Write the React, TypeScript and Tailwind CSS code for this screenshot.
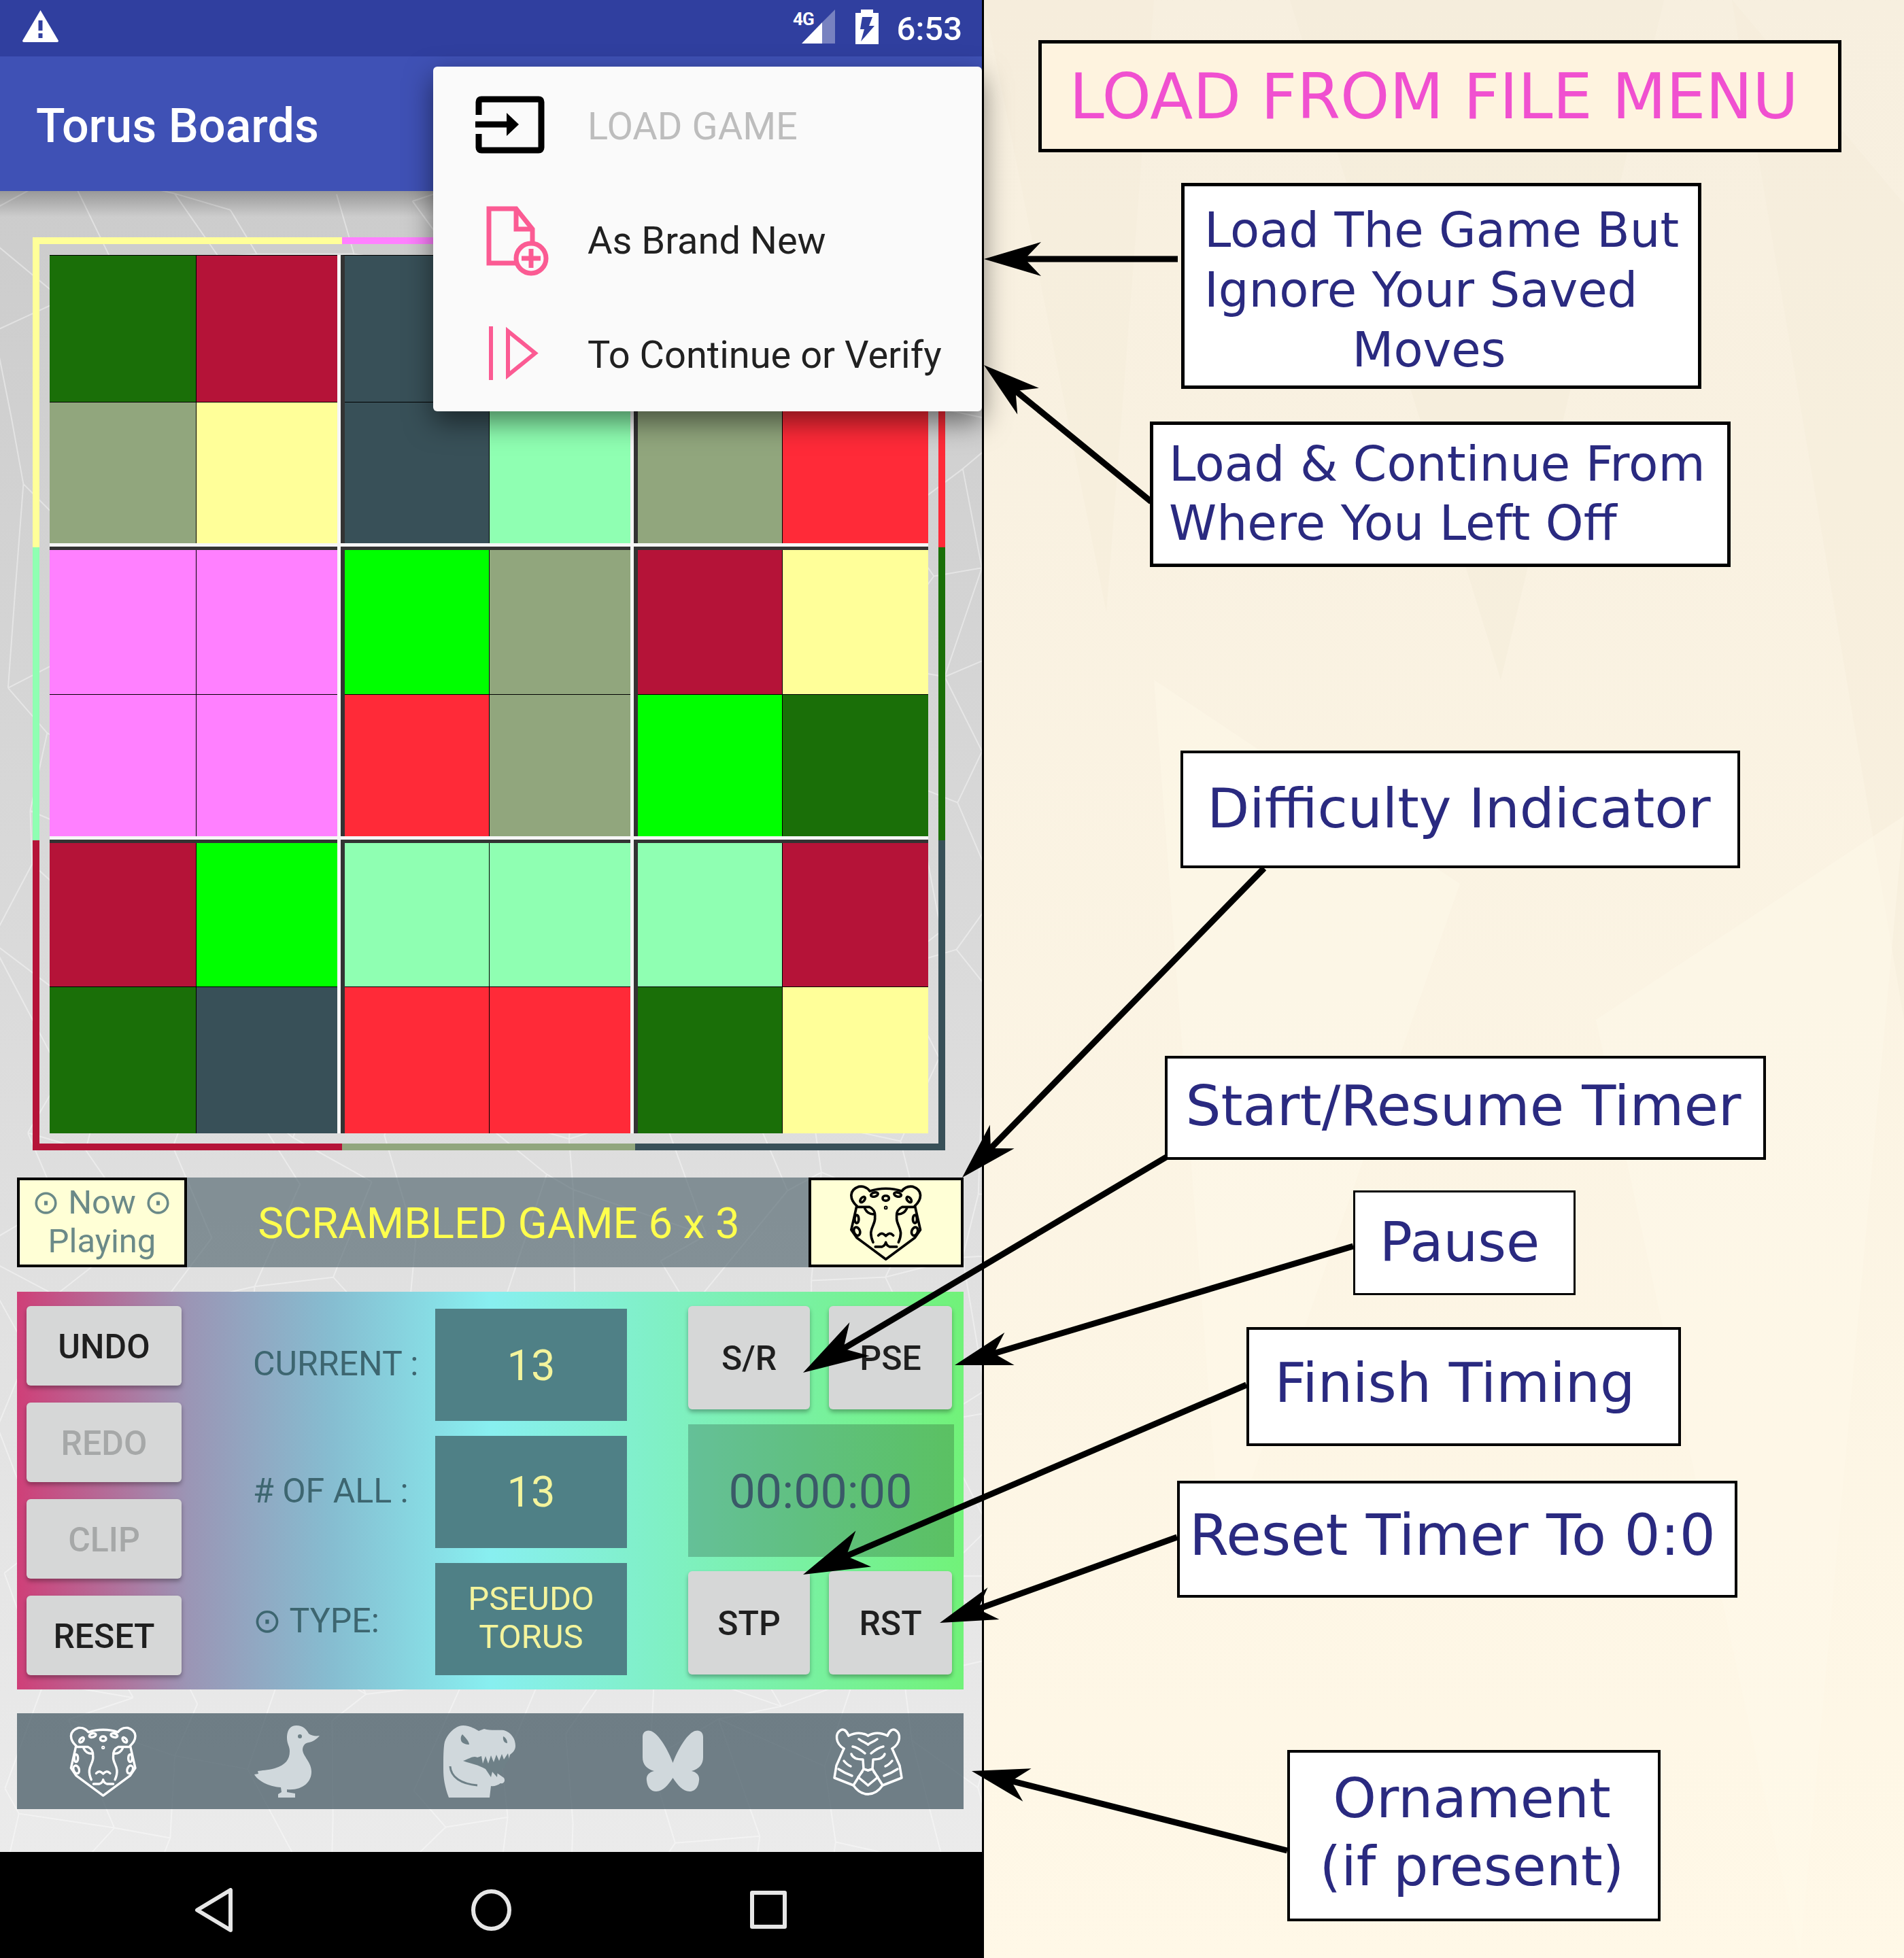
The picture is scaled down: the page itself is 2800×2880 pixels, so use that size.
const GREEN = "bg-[#1a6f08]";
const CRIM = "bg-[#b51338]";
const SLATE = "bg-[#385058]";
const OLIVE = "bg-[#91a67d]";
const YEL = "bg-[#ffff99]";
const MINT = "bg-[#8fffb2]";
const PINK = "bg-[#ff80ff]";
const LIME = "bg-[#00ff00]";
const RED = "bg-[#ff2a38]";

const board = [
  [GREEN, CRIM, SLATE, MINT, OLIVE, RED],
  [OLIVE, YEL, SLATE, MINT, OLIVE, RED],
  [PINK, PINK, LIME, OLIVE, CRIM, YEL],
  [PINK, PINK, RED, OLIVE, LIME, GREEN],
  [CRIM, LIME, MINT, MINT, MINT, CRIM],
  [GREEN, SLATE, RED, RED, GREEN, YEL],
];

const colTemplates = ["grid-cols-[215px_207px]", "grid-cols-[212px_207px]", "grid-cols-[212px_214px]"];
const rowTemplates = ["grid-rows-[215px_207px]", "grid-rows-[212px_208px]", "grid-rows-[211px_215px]"];

function Block({ row, col }: { row: number; col: number }) {
  const cells = [
    board[row * 2][col * 2],
    board[row * 2][col * 2 + 1],
    board[row * 2 + 1][col * 2],
    board[row * 2 + 1][col * 2 + 1],
  ];
  const top = row > 0 ? "border-t-[5px] border-t-[#333333]" : "border-t border-t-black";
  const left = col > 0 ? "border-l-[6px] border-l-[#333333]" : "";
  return (
    <div className={`grid gap-px bg-black ${colTemplates[col]} ${rowTemplates[row]} ${top} ${left}`}>
      {cells.map((c, i) => (
        <div key={i} className={c} />
      ))}
    </div>
  );
}

function Board() {
  return (
    <div className="grid h-[1292px] w-[1292px] grid-cols-[423px_426px_433px] grid-rows-[424px_426px_432px] gap-[5px] bg-[#f6f6f6]">
      {[0, 1, 2].map((r) => [0, 1, 2].map((c) => <Block key={`${r}-${c}`} row={r} col={c} />))}
    </div>
  );
}

function BoardFrame() {
  return (
    <div className="relative ml-[48px] mt-[68px] flex w-[1342px] flex-col">
      <div className="flex h-[10px]">
        <div className={`w-[455px] ${YEL}`} />
        <div className={`w-[431px] ${PINK}`} />
        <div className={`flex-1 ${RED}`} />
      </div>
      <div className="flex h-[1323px]">
        <div className="flex w-[10px] flex-col">
          <div className={`h-[446px] ${YEL}`} />
          <div className={`h-[431px] ${MINT}`} />
          <div className={`flex-1 ${CRIM}`} />
        </div>
        <div className="ml-[15px] mr-[15px] mt-[16px]">
          <Board />
        </div>
        <div className="flex w-[10px] flex-col">
          <div className={`h-[446px] ${RED}`} />
          <div className={`h-[431px] ${GREEN}`} />
          <div className={`flex-1 ${SLATE}`} />
        </div>
      </div>
      <div className="flex h-[10px]">
        <div className={`w-[455px] ${CRIM}`} />
        <div className={`w-[431px] ${OLIVE}`} />
        <div className={`flex-1 ${SLATE}`} />
      </div>
    </div>
  );
}

function Cheetah({ color, className }: { color: string; className: string }) {
  return (
    <svg viewBox="205 65 328 338" className={className} fill="none" stroke={color} strokeWidth="11" strokeLinecap="round" strokeLinejoin="round">
      <path d="M240 160 L216 265 L240 300 L368 395 L496 300 L520 265 L496 160" />
      <path d="M240 160 C208 130 205 90 250 75 C270 72 288 82 298 95 C340 80 396 80 438 95 C448 82 466 72 486 75 C531 90 528 130 496 160" />
      <ellipse cx="318" cy="110" rx="16" ry="9" transform="rotate(-15 318 110)" />
      <ellipse cx="420" cy="110" rx="16" ry="9" transform="rotate(15 420 110)" />
      <ellipse cx="368" cy="126" rx="14" ry="11" />
      <ellipse cx="266" cy="132" rx="8" ry="14" transform="rotate(40 266 132)" />
      <ellipse cx="470" cy="132" rx="8" ry="14" transform="rotate(-40 470 132)" />
      <circle cx="368" cy="168" r="3" />
      <path d="M246 165 L296 165 C318 175 322 190 320 210 C325 245 285 260 312 320" />
      <path d="M490 165 L440 165 C418 175 414 190 416 210 C411 245 451 260 424 320" />
      <path d="M276 172 C285 190 300 198 318 196" />
      <path d="M460 172 C451 190 436 198 418 196" />
      <path d="M335 290 C350 275 358 283 368 292 C378 283 386 275 401 290" />
      <path d="M322 340 L350 340 Q365 335 368 320 Q371 335 386 340 L416 340" />
      <ellipse cx="240" cy="218" rx="9" ry="18" />
      <ellipse cx="496" cy="218" rx="9" ry="18" />
      <ellipse cx="241" cy="272" rx="13" ry="19" transform="rotate(-20 241 272)" />
      <ellipse cx="495" cy="272" rx="13" ry="19" transform="rotate(20 495 272)" />
    </svg>
  );
}

function Duck() {
  return (
    <svg viewBox="0 0 96 106" className="ml-[171px] h-[106px] w-[96px]">
      <path
        fill="#d0d8dc"
        d="M62 0 C52 0 48 8 48 18 C48 28 52 30 52 38 C52 50 46 58 30 63 C20 66 10 66 5 67 L6 71 L0 72 C4 80 20 90 39 91 L40 98 L35 101 L35 106 L60 106 L60 100 L48 98 L48 94 C70 96 84 84 84 68 C84 54 72 46 71 36 C71 30 74 26 80 25 C86 24 92 20 96 15 C90 16 84 15 80 12 C76 4 70 0 62 0 Z"
      />
      <circle cx="67" cy="16" r="3" fill="#6e8087" />
    </svg>
  );
}

function Dino() {
  return (
    <svg viewBox="0 0 107 106" className="ml-[182px] h-[106px] w-[107px]">
      <path
        fill="#d0d8dc"
        d="M29 0 C36 0 44 3 52 8 L60 5 C70 8 82 6 89 7 C100 10 106 20 106 30 C106 36 102 40 98 43 L96 50 L62 58 L89 77 C92 82 88 86 84 85 C80 88 74 90 70 89 L68 106 L8 106 C2 90 0 78 0 64 C0 48 0 32 2 24 C6 12 18 0 29 0 Z"
      />
      <path
        fill="#6e8087"
        d="M29 52 C40 48 44 44 50 47 L56 45 L58 56 L62 45 L66 56 L70 44 L74 54 L78 43 L82 52 L86 42 L89 50 L95 41 L97 50 L92 56 L90 64 L86 62 L86 72 L80 66 L79 76 L72 68 L70 76 L62 64 C52 58 40 56 29 52 Z"
      />
      <path fill="#6e8087" d="M28 13 C33 18 38 24 38 28 C33 28 27 26 26 22 C25 18 26 15 28 13 Z" />
      <path fill="#6e8087" d="M88 16 C92 18 94 22 94 26 C90 26 87 22 88 16 Z" />
      <path fill="none" stroke="#6e8087" strokeWidth="3" d="M10 60 C11 76 26 86 50 88" />
    </svg>
  );
}

function Butterfly() {
  return (
    <svg viewBox="0 0 89 91" className="ml-[186px] h-[91px] w-[89px]">
      <path
        fill="#d0d8dc"
        d="M44.5 48 C38 30 24 5 12 1 C5 -1 0 3 0 10 L0 40 C0 50 6 57 17 60 C8 62 5 68 6 74 C7 84 12 90 20 90 C30 90 38 80 44.5 70 C51 80 59 90 69 90 C77 90 82 84 83 74 C84 68 81 62 72 60 C83 57 89 50 89 40 L89 10 C89 3 84 -1 77 1 C65 5 51 30 44.5 48 Z"
      />
    </svg>
  );
}

function TigerHalf() {
  return (
    <g>
      <path d="M15 30 C2 22 2 8 10 3 C15 0 19 4 22 11" />
      <path d="M22 11 C32 6 42 6 50.5 11" />
      <path d="M15 30 L4 55 L1 73 L29 84 Q38 97 50.5 97" />
      <path d="M37 16 C42 20 47 21 50.5 24" />
      <path d="M28 27 C34 28 40 32 46 37" />
      <path d="M26 38 C28 44 36 46 43 46 L44 60 L50.5 62" />
      <path d="M44 60 L29 84 M36 72 L50.5 84 M36 72 L42 64" />
      <path d="M15 48 Q20 54 25 56 M7 60 Q16 66 27 70" />
    </g>
  );
}

function Tiger() {
  return (
    <svg viewBox="-2 -2 105 101" className="ml-[190px] h-[101px] w-[105px]" fill="none" stroke="#ffffff" strokeWidth="3.5" strokeLinecap="round" strokeLinejoin="round">
      <TigerHalf />
      <g transform="translate(101 0) scale(-1 1)">
        <TigerHalf />
      </g>
    </svg>
  );
}

function LoadIcon() {
  return (
    <svg viewBox="0 0 102 85" className="h-[85px] w-[102px]" fill="none" stroke="#000000" strokeWidth="9" strokeLinejoin="round">
      <path d="M5 28 L5 9 Q5 5 9 5 L93 5 Q97 5 97 9 L97 76 Q97 80 93 80 L9 80 Q5 80 5 76 L5 56" />
      <path d="M0 42 L50 42" />
      <path d="M46 25 L64 42 L46 59 Z" fill="#000000" stroke="none" />
    </svg>
  );
}

function DocPlusIcon() {
  return (
    <svg viewBox="0 0 92 103" className="mt-[6px] h-[103px] w-[92px]" fill="none" stroke="#fb5b93" strokeWidth="7">
      <path d="M47 84 L4 84 L4 4 L44 4 L68 34 L68 56" />
      <path d="M44 4 L44 34 L68 34" />
      <circle cx="66" cy="77" r="22" fill="#fafafa" />
      <path d="M66 63 L66 91 M52 77 L80 77" />
    </svg>
  );
}

function PlayIcon() {
  return (
    <svg viewBox="0 0 75 79" className="h-[79px] w-[75px]" fill="none" stroke="#fb5b93" strokeWidth="6">
      <path d="M3 0 L3 79" />
      <path d="M28 7 L68 39.5 L28 72 Z" />
    </svg>
  );
}

function MenuRow({ icon, label, muted, iconClass }: { icon: React.ReactNode; label: string; muted?: boolean; iconClass: string }) {
  return (
    <div className="flex h-[168px] items-center">
      <div className={`flex w-[227px] shrink-0 ${iconClass}`}>{icon}</div>
      <span className={`pt-[6px] text-[56px] ${muted ? "text-[#bdbdbd]" : "text-[#212121]"}`}>{label}</span>
    </div>
  );
}

function Menu() {
  return (
    <div className="absolute left-[637px] top-[98px] z-30 h-[507px] w-[807px] rounded-[6px] bg-[#fafafa] pt-[1px] shadow-[0_16px_40px_rgba(0,0,0,0.5)]">
      <MenuRow icon={<LoadIcon />} label="LOAD GAME" muted iconClass="pl-[62px]" />
      <MenuRow icon={<DocPlusIcon />} label="As Brand New" iconClass="pl-[78px]" />
      <MenuRow icon={<PlayIcon />} label="To Continue or Verify" iconClass="pl-[82px]" />
    </div>
  );
}

function StatusBar() {
  return (
    <div className="flex h-[83px] items-center bg-[#303f9f] text-white">
      <svg viewBox="0 0 53 47" className="mb-[6px] ml-[33px] h-[47px] w-[53px]">
        <path fill="#ffffff" d="M26.5 0 L53 45 Q53 47 51 47 L2 47 Q0 47 0 45 Z" />
        <rect x="23.5" y="15" width="6" height="15" fill="#303f9f" />
        <rect x="23.5" y="34" width="6" height="7" fill="#303f9f" />
      </svg>
      <svg viewBox="0 0 62 50" className="mb-[5px] ml-auto h-[50px] w-[62px] overflow-visible">
        <text x="0" y="23" fontFamily="Roboto, sans-serif" fontWeight="700" fontSize="26" letterSpacing="-1" fill="#ffffff">
          4G
        </text>
        <path d="M62 0 L62 50 L43 50 L43 19 Z" fill="#ffffff" fillOpacity="0.35" />
        <path d="M43 19 L43 50 L13 50 Z" fill="#ffffff" />
      </svg>
      <svg viewBox="0 0 34 51" className="mb-[5px] ml-[30px] h-[51px] w-[34px]">
        <path fill="#ffffff" d="M8 0 L26 0 L26 5 L34 5 L34 51 L0 51 L0 5 L8 5 Z" />
        <path fill="#303f9f" d="M10 11 L25 11 L20 24 L28 24 L8 47 L13 29 L7 29 Z" />
      </svg>
      <span className="ml-[27px] mr-[29px] pt-[2px] text-[49px] font-medium leading-none">6:53</span>
    </div>
  );
}

function WebPattern() {
  // faint cracked mesh behind the board
  const cols = 13;
  const rows = 22;
  let seed = 7;
  const rnd = () => {
    seed = (seed * 16807) % 2147483647;
    return seed / 2147483647;
  };
  const pts: [number, number][][] = [];
  for (let r = 0; r <= rows; r++) {
    const line: [number, number][] = [];
    for (let c = 0; c <= cols; c++) {
      line.push([c * 118 + (r % 2) * 55 + (rnd() - 0.5) * 90, r * 115 + (rnd() - 0.5) * 110]);
    }
    pts.push(line);
  }
  const segs: string[] = [];
  for (let r = 0; r <= rows; r++) {
    for (let c = 0; c <= cols; c++) {
      const p = pts[r][c];
      if (c < cols && rnd() > 0.45) segs.push(`M${p[0]} ${p[1]}L${pts[r][c + 1][0]} ${pts[r][c + 1][1]}`);
      if (r < rows) segs.push(`M${p[0]} ${p[1]}L${pts[r + 1][c][0]} ${pts[r + 1][c][1]}`);
    }
  }
  return (
    <svg className="absolute inset-0 h-full w-full" viewBox="0 0 1444 2443" preserveAspectRatio="none">
      <path d={segs.join("")} fill="none" stroke="#ffffff" strokeOpacity="0.4" strokeWidth="2" />
    </svg>
  );
}

function GameBar() {
  return (
    <div className="relative ml-[25px] mt-[40px] flex h-[132px] w-[1392px] bg-[#455a64]/60">
      <div className="flex w-[250px] flex-col items-center justify-center border-[4px] border-black bg-[#ffffd6] pb-[3px] text-[49px] leading-[57px] text-[#6b8a88]">
        <span>⊙ Now ⊙</span>
        <span>Playing</span>
      </div>
      <div className="flex flex-1 items-center justify-center pl-[3px] pt-[4px] text-[63.5px] text-[#ffff4d]">SCRAMBLED GAME 6 x 3</div>
      <div className="flex w-[228px] items-center justify-center border-[4px] border-black bg-[#ffffd6]">
        <Cheetah color="#000000" className="h-[113px] w-[110px]" />
      </div>
    </div>
  );
}

function GrayButton({ label, disabled, className }: { label: string; disabled?: boolean; className: string }) {
  return (
    <div
      className={`flex items-center justify-center rounded-[6px] bg-[#d6d7d7] pt-[3px] text-[50px] font-medium shadow-[0_4px_6px_rgba(0,0,0,0.3)] ${
        disabled ? "text-[#a6a8a8]" : "text-[#1f1f1f]"
      } ${className}`}
    >
      {label}
    </div>
  );
}

function StatRow({ label, value, labelClass }: { label: string; value: React.ReactNode; labelClass: string }) {
  return (
    <div className="flex h-[165px]">
      <div className={`flex w-[268px] items-center text-[50px] text-[#3d6670] ${labelClass}`}>{label}</div>
      <div className="flex w-[282px] flex-col items-center justify-center bg-[#4f8086] text-center text-[#f4f49c]">{value}</div>
    </div>
  );
}

function ControlPanel() {
  return (
    <div className="relative ml-[25px] mt-[36px] flex h-[585px] w-[1392px] bg-[linear-gradient(to_right,#cf3f78_0%,#9b95b5_18%,#86bcd0_33%,#88eff0_50%,#71f279_100%)]">
      <div className="ml-[14px] mt-[21px] flex w-[228px] flex-col gap-[25px]">
        <GrayButton label="UNDO" className="h-[117px]" />
        <GrayButton label="REDO" disabled className="h-[117px]" />
        <GrayButton label="CLIP" disabled className="h-[117px]" />
        <GrayButton label="RESET" className="h-[117px]" />
      </div>
      <div className="ml-[105px] mt-[25px] flex w-[550px] flex-col gap-[22px]">
        <StatRow label="CURRENT :" labelClass="pb-[3px]" value={<span className="pt-[4px] text-[63px]">13</span>} />
        <StatRow label="# OF ALL :" labelClass="pb-[2px]" value={<span className="pt-[2px] text-[63px]">13</span>} />
        <StatRow
          label="⊙ TYPE:"
          labelClass="pt-[5px]"
          value={
            <span className="pb-[4px] text-[49px] leading-[56px]">
              PSEUDO
              <br />
              TORUS
            </span>
          }
        />
      </div>
      <div className="ml-[90px] mt-[21px] flex w-[391px] flex-col">
        <div className="flex h-[152px] gap-[28px]">
          <GrayButton label="S/R" className="w-[179px]" />
          <GrayButton label="PSE" className="w-[181px]" />
        </div>
        <div className="mt-[22px] flex h-[195px] items-center justify-center bg-black/20 pr-[2px] pt-[4px] text-[70px] text-[#3a5a68]">00:00:00</div>
        <div className="mt-[21px] flex h-[152px] gap-[28px]">
          <GrayButton label="STP" className="w-[179px]" />
          <GrayButton label="RST" className="w-[181px]" />
        </div>
      </div>
    </div>
  );
}

function OrnamentBar() {
  return (
    <div className="relative ml-[25px] mt-[35px] flex h-[141px] w-[1392px] items-center bg-[#455a64]/75 pl-[76px]">
      <Cheetah color="#ffffff" className="h-[106px] w-[102px]" />
      <Duck />
      <Dino />
      <Butterfly />
      <Tiger />
    </div>
  );
}

function NavBar() {
  return (
    <div className="flex h-[156px] items-center gap-[351px] bg-black pl-[287px] pt-[14px]">
      <svg viewBox="0 0 55 65" className="h-[65px] w-[55px]" fill="none" stroke="#e6e6e6" strokeWidth="6" strokeLinejoin="round">
        <path d="M52 3 L52 62 L3 32.5 Z" />
      </svg>
      <svg viewBox="0 0 59 61" className="h-[61px] w-[59px]" fill="none" stroke="#e6e6e6" strokeWidth="6">
        <ellipse cx="29.5" cy="30.5" rx="26.5" ry="27.5" />
      </svg>
      <svg viewBox="0 0 54 56" className="h-[56px] w-[54px]" fill="none" stroke="#e6e6e6" strokeWidth="6" strokeLinejoin="round">
        <rect x="3" y="3" width="48" height="50" />
      </svg>
    </div>
  );
}

function Phone() {
  return (
    <div className="relative h-[2880px] w-[1447px] shrink-0 border-r-[3px] border-r-black font-['Roboto',sans-serif]">
      <StatusBar />
      <div className="relative z-20 flex h-[198px] items-center bg-[#3f51b5] pl-[53px]">
        <span className="pt-[6px] text-[70px] font-medium text-white">Torus Boards</span>
      </div>
      <Menu />
      <div className="relative flex h-[2443px] flex-col overflow-hidden bg-gradient-to-b from-[#cccccc] to-[#ebebeb]">
        <WebPattern />
        <div className="absolute left-0 top-0 z-10 h-[38px] w-full bg-gradient-to-b from-black/25 to-transparent" />
        <BoardFrame />
        <GameBar />
        <ControlPanel />
        <OrnamentBar />
      </div>
      <NavBar />
    </div>
  );
}

function Arrow({ from, to, size = 1 }: { from: [number, number]; to: [number, number]; size?: number }) {
  const dx = from[0] - to[0];
  const dy = from[1] - to[1];
  const len = Math.hypot(dx, dy);
  const ux = dx / len;
  const uy = dy / len;
  const at = (along: number, side: number) => `${to[0] + ux * along * size - uy * side * size},${to[1] + uy * along * size + ux * side * size}`;
  return (
    <g>
      <line x1={from[0]} y1={from[1]} x2={to[0] + ux * 55} y2={to[1] + uy * 55} stroke="#000000" strokeWidth="9" />
      <polygon points={`${at(0, 0)} ${at(84, 25)} ${at(60, 0)} ${at(84, -25)}`} fill="#000000" />
    </g>
  );
}

function Arrows() {
  return (
    <svg className="pointer-events-none absolute left-0 top-0 z-40 h-[2880px] w-[2800px]" viewBox="0 0 2800 2880">
      <Arrow from={[1732, 381]} to={[1447, 381]} />
      <Arrow from={[1693, 738]} to={[1447, 537]} />
      <Arrow from={[1859, 1277]} to={[1415, 1732]} />
      <Arrow from={[1715, 1702]} to={[1181, 2019]} size={1.15} />
      <Arrow from={[1990, 1833]} to={[1404, 2008]} />
      <Arrow from={[1833, 2037]} to={[1181, 2316]} size={1.15} />
      <Arrow from={[1731, 2261]} to={[1382, 2387]} />
      <Arrow from={[1893, 2722]} to={[1429, 2605]} />
    </svg>
  );
}

function Callout({ className, children }: { className: string; children: React.ReactNode }) {
  return <div className={`relative border-black bg-white text-[#2a2a80] ${className}`}>{children}</div>;
}

function Notes() {
  return (
    <div className="relative flex h-[2880px] flex-1 flex-col overflow-hidden bg-gradient-to-b from-[#f7efdf] to-[#fff8e7] font-['DejaVu_Sans',sans-serif]">
      <svg className="absolute inset-0 h-full w-full" viewBox="0 0 1353 2880" preserveAspectRatio="none">
        <path d="M0 0 L250 0 L180 900 Z" fill="#f3ead8" fillOpacity="0.35" />
        <path d="M450 0 L1000 0 L760 1000 Z" fill="#f3ead8" fillOpacity="0.4" />
        <path d="M1100 0 L1353 300 L1353 1500 Z" fill="#f3ead8" fillOpacity="0.35" />
        <path d="M250 1000 L700 1300 L350 2300 Z" fill="#fff9ea" fillOpacity="0.4" />
        <path d="M900 1500 L1353 1200 L1200 2880 Z" fill="#fff9ea" fillOpacity="0.4" />
      </svg>
      <div className="relative ml-[80px] mt-[59px] flex h-[165px] w-[1181px] items-center justify-center border-[5px] border-black bg-[#fef3df] pr-[18px] pt-[2px] text-[92px] text-[#f050d0]">
        LOAD FROM FILE MENU
      </div>
      <Callout className="ml-[290px] mt-[45px] h-[303px] w-[765px] border-[5px] pl-[29px] pt-[21px] text-[70.5px] leading-[88px]">
        <div>Load The Game But</div>
        <div>Ignore Your Saved</div>
        <div className="pr-[65px] text-center">Moves</div>
      </Callout>
      <Callout className="ml-[244px] mt-[48px] h-[214px] w-[854px] border-[5px] pl-[23px] pt-[14px] text-[71px] leading-[87px]">
        <div>Load &amp; Continue From</div>
        <div>Where You Left Off</div>
      </Callout>
      <Callout className="ml-[289px] mt-[270px] flex h-[173px] w-[823px] items-center justify-center border-[4px] pb-[2px] pr-[4px] text-[80.5px]">
        Difficulty Indicator
      </Callout>
      <Callout className="ml-[266px] mt-[276px] flex h-[153px] w-[884px] items-center justify-center border-[4px] pb-[6px] pr-[6px] text-[82px]">
        Start/Resume Timer
      </Callout>
      <Callout className="ml-[543px] mt-[45px] flex h-[154px] w-[327px] items-center justify-center border-[3px] pr-[14px] text-[80px]">
        Pause
      </Callout>
      <Callout className="ml-[386px] mt-[47px] flex h-[175px] w-[639px] items-center justify-center border-[4px] pb-[10px] pr-[26px] text-[81px]">
        Finish Timing
      </Callout>
      <Callout className="ml-[284px] mt-[51px] flex h-[172px] w-[824px] items-center justify-center border-[4px] pb-[10px] pr-[14px] text-[83.5px]">
        Reset Timer To 0:0
      </Callout>
      <Callout className="ml-[446px] mt-[224px] flex h-[252px] w-[549px] flex-col items-center justify-center border-[4px] pb-[10px] pr-[6px] text-[81px] leading-[100px]">
        <span>Ornament</span>
        <span>(if present)</span>
      </Callout>
    </div>
  );
}

export default function App() {
  return (
    <div className="relative flex h-[2880px] w-[2800px] overflow-hidden">
      <Phone />
      <Notes />
      <Arrows />
    </div>
  );
}
